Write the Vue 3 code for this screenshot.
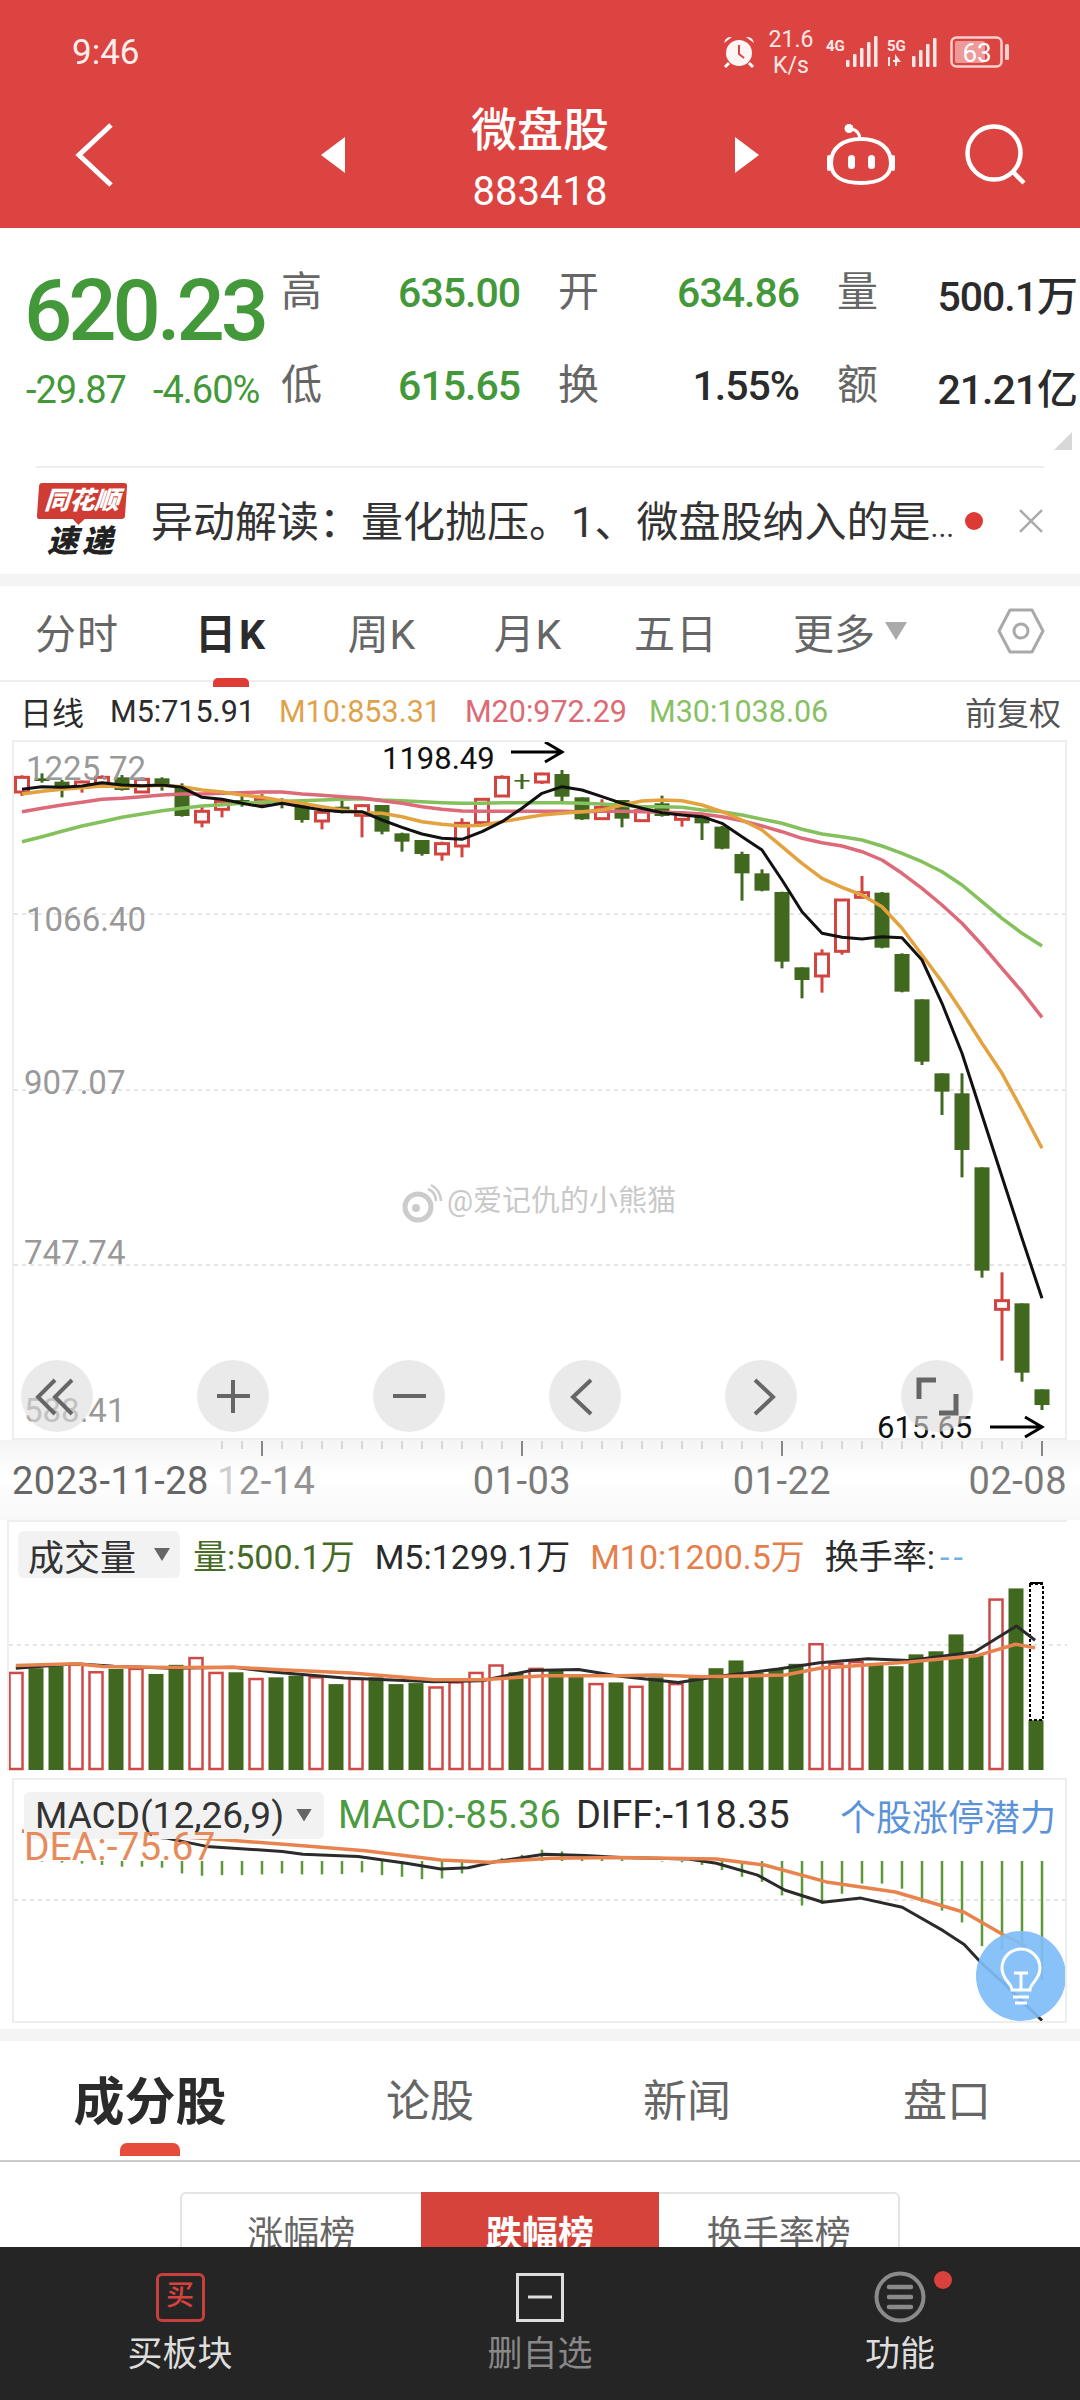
<template>
  <div class="phone">
    <div class="page">
      <header class="top">
        <div class="status">
          <span class="time">9:46</span>
          <svg class="status-icons" width="292" height="50" viewBox="720 27 292 50">
            <circle cx="739" cy="53" r="13" fill="#fff" opacity=".95" />
            <path d="M739 45v9l5 4" fill="none" stroke="#dc4441" stroke-width="2" />
            <path d="M724 43a7 7 0 0 1 8-6zM754 43a7 7 0 0 0-8-6z" fill="#fff" />
            <path d="M729 63l-4 4M749 63l4 4" stroke="#fff" stroke-width="3" />
            <text x="791" y="47" class="st-net" text-anchor="middle">21.6</text>
            <text x="791" y="73" class="st-net" text-anchor="middle">K/s</text>
            <text x="826" y="51" class="st-small">4G</text>
            <text x="887" y="51" class="st-small">5G</text>
            <rect v-for="b in signalA" :key="'a' + b.x" :x="b.x" :y="b.y" width="3.5" :height="67 - b.y" rx="1" fill="#fde8e8" />
            <rect v-for="b in signalB" :key="'b' + b.x" :x="b.x" :y="b.y" width="3.5" :height="67 - b.y" rx="1" fill="#fde8e8" />
            <path d="M889 57v9M893 61h6l-3-4v9" fill="none" stroke="#fde8e8" stroke-width="2" />
            <rect x="951.5" y="37.5" width="50" height="29" rx="5" fill="none" stroke="#f7cfcf" stroke-width="2.5" />
            <rect x="955" y="41" width="30" height="22" rx="2" fill="#ee9a98" />
            <rect x="1005" y="44" width="4" height="16" rx="1.5" fill="#f7cfcf" />
            <text x="977" y="62" class="st-batt" text-anchor="middle">63</text>
          </svg>
        </div>
        <div class="title-row">
          <svg class="back" width="40" height="66" viewBox="0 0 40 66">
            <path d="M36 3L4 33l32 30" fill="none" stroke="#fff" stroke-width="5" />
          </svg>
          <span class="tri tri-left"></span>
          <div class="title">
            <div class="name">微盘股</div>
            <div class="code">883418</div>
          </div>
          <span class="tri tri-right"></span>
          <svg class="robot" width="68" height="62" viewBox="0 0 68 62">
            <circle cx="22" cy="4.5" r="4.5" fill="#fff" />
            <path d="M24 5c7 1 9 6 9 11" fill="none" stroke="#fff" stroke-width="3" />
            <path d="M34 15c18 0 30 9 30 24 0 13-11 20-30 20S4 52 4 39c0-15 12-24 30-24z" fill="none" stroke="#fff" stroke-width="4" />
            <rect x="0" y="31" width="4" height="16" rx="2" fill="#fff" />
            <rect x="64" y="31" width="4" height="16" rx="2" fill="#fff" />
            <rect x="21" y="31" width="7" height="14" rx="3.5" fill="#fff" />
            <rect x="41" y="31" width="7" height="14" rx="3.5" fill="#fff" />
          </svg>
          <svg class="search" width="62" height="62" viewBox="0 0 62 62">
            <circle cx="29" cy="29" r="26.5" fill="none" stroke="#fff" stroke-width="4.5" />
            <path d="M48 48l11 11" stroke="#fff" stroke-width="4.5" />
          </svg>
        </div>
      </header>

      <section class="quote">
        <div class="quote-main">
          <div class="quote-left">
            <div class="price">620.23</div>
            <div class="change"><span>-29.87</span><span>-4.60%</span></div>
          </div>
          <div class="quote-grid">
            <div v-for="q in quoteCells" :key="q.label" class="cell">
              <span class="cell-label">{{ q.label }}</span>
              <span class="cell-value" :class="{ down: q.down }">{{ q.value }}</span>
            </div>
          </div>
        </div>
        <div class="quote-foot"><span class="corner"></span></div>
      </section>

      <section class="news">
        <div class="logo">
          <div class="logo-top">同花顺</div>
          <div class="logo-bottom">速递</div>
        </div>
        <div class="news-text">异动解读：量化抛压。1、微盘股纳入的是<span class="dots">...</span></div>
        <span class="news-dot"></span>
        <svg class="news-close" width="26" height="26" viewBox="0 0 26 26">
          <path d="M2 2l22 22M24 2L2 24" stroke="#aaa" stroke-width="2.5" />
        </svg>
      </section>
      <div class="stripe"></div>

      <nav class="period">
        <span v-for="p in periods" :key="p.text" class="period-item" :class="{ on: p.on }" :style="{ width: p.w + 'px' }">{{ p.text }}</span>
        <span class="period-more">更多<i class="more-tri"></i></span>
        <svg class="hex" width="48" height="46" viewBox="0 0 48 46">
          <path d="M13 2h22l11 21-11 21H13L2 23z" fill="none" stroke="#a9a9a9" stroke-width="3" stroke-linejoin="round" />
          <circle cx="24" cy="23" r="7" fill="none" stroke="#a9a9a9" stroke-width="3" />
        </svg>
      </nav>

      <div class="ma-row">
        <span class="ma-label">日线</span>
        <span class="ma5">M5:715.91</span>
        <span class="ma10">M10:853.31</span>
        <span class="ma20">M20:972.29</span>
        <span class="ma30">M30:1038.06</span>
        <span class="ma-adj">前复权</span>
      </div>

      <div class="kline">
        <svg width="1051" height="696" viewBox="14 742 1051 696">
          <line v-for="y in [914, 1090, 1265]" :key="y" x1="14" x2="1065" :y1="y" :y2="y" class="grid-line" />
          <g v-for="c in candles" :key="c.x">
            <line :x1="c.x" :x2="c.x" :y1="c.wt" :y2="c.wb" :stroke="c.up ? '#d2443f' : '#40691f'" stroke-width="3" />
            <rect v-if="c.up" :x="c.x - 6.5" :y="c.bt" width="13" :height="c.bh" fill="#fff" stroke="#d2443f" stroke-width="3" />
            <rect v-else :x="c.x - 7.5" :y="c.bt" width="15" :height="c.bh" fill="#40691f" />
          </g>
          <polyline :points="ma30" class="ln" stroke="#84c05c" stroke-width="3.5" />
          <polyline :points="ma20" class="ln" stroke="#dd6a78" stroke-width="3.5" />
          <polyline :points="ma10" class="ln" stroke="#e3a23e" stroke-width="3.5" />
          <polyline :points="ma5" class="ln" stroke="#111" stroke-width="3" />

          <text x="26" y="780" class="axis-label">1225.72</text>
          <text x="26" y="931" class="axis-label">1066.40</text>
          <text x="24" y="1094" class="axis-label">907.07</text>
          <text x="24" y="1264" class="axis-label">747.74</text>
          <text x="24" y="1422" class="axis-label">588.41</text>

          <text x="382" y="769" class="mark">1198.49</text>
          <path d="M511 752h50M545 742l17 10-17 10" fill="none" stroke="#000" stroke-width="3" />
          <text x="877" y="1438" class="mark">615.65</text>
          <path d="M990 1427h52M1025 1417l17 10-17 10" fill="none" stroke="#000" stroke-width="3" />

          <g class="watermark">
            <circle cx="418" cy="1207" r="13" fill="none" stroke="#ccc" stroke-width="5" />
            <circle cx="416" cy="1208" r="4" fill="#ccc" />
            <path d="M428 1189a13 13 0 0 1 8 12M431 1185a19 19 0 0 1 10 16" fill="none" stroke="#ccc" stroke-width="2.5" />
            <text x="447" y="1211" class="wm-text">@爱记仇的小熊猫</text>
          </g>

          <circle v-for="x in zoomBtns" :key="x" :cx="x" cy="1396" r="36" fill="#dcdcdc" opacity=".6" />
          <g fill="none" stroke="#666" stroke-width="4">
            <path d="M55 1380l-17 17 17 17M72 1380l-17 17 17 17" />
            <path d="M233 1380v33M217 1396h33" />
            <path d="M393 1396h33" />
            <path d="M591 1380l-18 17 18 17" />
            <path d="M755 1380l18 17-18 17" />
            <path d="M919 1399v-19h17M956 1394v19h-17" stroke-width="5" />
          </g>
        </svg>
      </div>

      <svg class="axis" width="1080" height="80" viewBox="0 1440 1080 80">
        <line v-for="x in ticks" :key="x" :x1="x" :x2="x" y1="1441" y2="1449" stroke="#ccc" stroke-width="1.5" />
        <line v-for="x in [262, 522, 782, 1042]" :key="x" :x1="x" :x2="x" y1="1441" y2="1456" stroke="#888" stroke-width="2" />
        <text x="12" y="1494" class="date date-first">2023-11-28</text>
        <text x="217" y="1494" class="date"><tspan opacity=".35">1</tspan><tspan opacity=".8">2-14</tspan></text>
        <text x="522" y="1494" class="date" text-anchor="middle">01-03</text>
        <text x="782" y="1494" class="date" text-anchor="middle">01-22</text>
        <text x="1067" y="1494" class="date" text-anchor="end">02-08</text>
      </svg>

      <section class="volume">
        <div class="pane-head">
          <span class="chip chip-vol">成交量<i class="chip-tri"></i></span>
          <span class="v-green">量:500.1万</span>
          <span class="v-dark">M5:1299.1万</span>
          <span class="v-orange">M10:1200.5万</span>
          <span class="v-dark">换手率:<b class="v-blue">--</b></span>
        </div>
        <svg width="1058" height="193" viewBox="9 1578 1058 193">
          <line x1="9" x2="1067" y1="1645" y2="1645" class="grid-line" />
          <g v-for="b in volBars" :key="b.x">
            <rect v-if="b.up" :x="b.x - 6.5" :y="b.y" width="13" :height="1769 - b.y" fill="#fff" stroke="#cf4a46" stroke-width="2.5" />
            <rect v-else :x="b.x - 7.5" :y="b.y" width="15" :height="1770 - b.y" fill="#40691f" />
          </g>
          <rect x="1030" y="1584" width="13" height="136" fill="none" stroke="#000" stroke-width="2" stroke-dasharray="3 2" />
          <rect x="1030" y="1582" width="13" height="2" fill="#000" />
          <polyline :points="volBlack" class="ln" stroke="#2b2b2b" stroke-width="3" />
          <polyline :points="volOrange" class="ln" stroke="#e8834d" stroke-width="3.5" />
        </svg>
      </section>

      <section class="macd">
        <svg width="1051" height="241" viewBox="14 1780 1051 241">
          <line x1="14" x2="1065" y1="1900" y2="1900" class="grid-line" />
          <line v-for="b in macdBars" :key="b.x" :x1="b.x" :x2="b.x" y1="1861" :y2="b.y" stroke="#5a9a3a" stroke-width="2.5" />
          <polyline :points="macdBlack" class="ln" stroke="#2b2b2b" stroke-width="3" />
          <polyline :points="macdOrange" class="ln" stroke="#e8834d" stroke-width="3.5" />
          <circle cx="1021" cy="1976" r="45" fill="#7fbdf7" opacity=".92" />
          <path d="M1012 1990c0-7-10-10-10-22a19 19 0 0 1 38 0c0 12-10 15-10 22zM1013 1997h16M1015 2003h12M1014 1973h14M1021 1973v17" fill="none" stroke="#fff" stroke-width="3" />
        </svg>
        <div class="macd-head">
          <span class="chip chip-macd">MACD(12,26,9)<i class="chip-tri"></i></span>
          <span class="m-green">MACD:-85.36</span>
          <span class="m-dark">DIFF:-118.35</span>
          <span class="m-blue">个股涨停潜力</span>
        </div>
        <span class="dea">DEA:-75.67</span>
      </section>
      <div class="stripe stripe-low"></div>

      <nav class="detail-tabs">
        <span class="detail-tab on">成分股</span>
        <span class="detail-tab">论股</span>
        <span class="detail-tab">新闻</span>
        <span class="detail-tab">盘口</span>
      </nav>

      <div class="rank">
        <span class="rank-item">涨幅榜</span>
        <span class="rank-item on">跌幅榜</span>
        <span class="rank-item">换手率榜</span>
      </div>
    </div>

    <footer class="bottom">
      <div class="bottom-item">
        <div class="bottom-icon"><span class="buy-icon">买</span></div>
        <span class="bottom-text">买板块</span>
      </div>
      <div class="bottom-item">
        <div class="bottom-icon">
          <svg width="48" height="49" viewBox="0 0 48 49">
            <rect x="1.5" y="1.5" width="45" height="46" fill="none" stroke="#ddd" stroke-width="3" />
            <path d="M12 24h24" stroke="#ddd" stroke-width="3" />
          </svg>
        </div>
        <span class="bottom-text muted">删自选</span>
      </div>
      <div class="bottom-item">
        <div class="bottom-icon">
          <svg width="52" height="52" viewBox="0 0 52 52">
            <circle cx="26" cy="26" r="23.5" fill="none" stroke="#8a8a8a" stroke-width="4" />
            <path d="M15 16h22M15 26h22M15 36h22" stroke="#8a8a8a" stroke-width="4.5" stroke-linecap="round" />
          </svg>
        </div>
        <span class="bottom-text">功能</span>
        <span class="bottom-dot"></span>
      </div>
    </footer>
  </div>
</template>

<script setup>
// 所有图表坐标都按整页像素换算
const quoteCells = [
  { label: '高', value: '635.00', down: true },
  { label: '开', value: '634.86', down: true },
  { label: '量', value: '500.1万' },
  { label: '低', value: '615.65', down: true },
  { label: '换', value: '1.55%' },
  { label: '额', value: '21.21亿' },
];

const periods = [
  { text: '分时', w: 154 },
  { text: '日K', w: 155, on: true },
  { text: '周K', w: 146 },
  { text: '月K', w: 146 },
  { text: '五日', w: 150 },
];

const signalA = [846, 853, 860, 867, 874].map((x, i) => ({ x, y: 60 - i * 6 }));
const signalB = [912, 919, 926, 933].map((x, i) => ({ x, y: 56 - i * 6 }));

const zy = (z) => 590 + z / 3;
const ix = (i) => 22 + 20 * i;

// [涨?, 上影, 实体顶, 实体底, 下影]，取自放大图的纵坐标
const rawCandles = [
  [1, 556, 562, 606, 618], [0, 550, 565, 573, 578], [0, 570, 575, 592, 622], [1, 572, 576, 590, 608],
  [1, 556, 562, 580, 585], [0, 555, 562, 600, 602], [1, 562, 568, 606, 608], [0, 562, 565, 588, 602],
  [0, 580, 590, 678, 680], [1, 645, 664, 696, 712], [1, 625, 634, 658, 682], [0, 604, 630, 640, 650],
  [1, 612, 628, 640, 650], [0, 625, 638, 642, 655], [0, 638, 640, 690, 698], [1, 660, 667, 693, 718],
  [0, 625, 650, 668, 670], [1, 643, 647, 676, 742], [0, 645, 645, 725, 733], [0, 728, 730, 755, 785],
  [0, 750, 750, 792, 797], [1, 755, 761, 792, 812], [1, 685, 700, 768, 802], [1, 626, 628, 698, 700],
  [1, 556, 562, 618, 620], [0, 552, 570, 575, 597], [1, 548, 552, 576, 582], [0, 540, 552, 620, 635],
  [0, 622, 622, 688, 690], [1, 628, 652, 686, 688], [0, 630, 630, 686, 712], [1, 655, 662, 692, 696],
  [0, 617, 640, 678, 680], [1, 670, 674, 688, 710], [0, 672, 678, 700, 750], [0, 708, 710, 776, 778],
  [0, 785, 792, 850, 932], [0, 838, 850, 902, 904], [0, 905, 906, 1115, 1135], [0, 1132, 1132, 1170, 1225],
  [1, 1078, 1092, 1158, 1208], [1, 928, 930, 1084, 1094], [1, 858, 908, 922, 924], [0, 906, 908, 1073, 1075],
  [0, 1090, 1092, 1205, 1207], [0, 1228, 1228, 1415, 1425], [0, 1450, 1450, 1505, 1575], [0, 1450, 1510, 1680, 1762],
  [0, 1732, 1732, 2042, 2063], [1, 2047, 2132, 2158, 2312], [0, 2140, 2140, 2348, 2375], [0, 2398, 2398, 2445, 2460],
];

const candles = rawCandles.map((c, i) => ({
  x: ix(i),
  up: c[0] === 1,
  wt: zy(c[1]),
  bt: zy(c[2]),
  bh: (c[3] - c[2]) / 3,
  wb: zy(c[4]),
}));

const toLine = (ys) => ys.map((y, i) => `${ix(i)},${zy(y).toFixed(1)}`).join(' ');

const ma5 = toLine([598, 590, 592, 588, 578, 585, 587, 585, 592, 622, 628, 640, 650, 640, 650, 660, 665, 665, 690, 712, 732, 745, 748, 725, 695, 655, 610, 590, 600, 620, 640, 655, 668, 675, 680, 700, 740, 780, 870, 965, 1030, 1042, 1047, 1040, 1043, 1110, 1240, 1390, 1575, 1760, 1945, 2125]);
const ma10 = toLine([612, 604, 598, 593, 588, 590, 588, 586, 590, 600, 606, 615, 622, 632, 640, 650, 660, 668, 670, 680, 695, 703, 708, 706, 695, 685, 675, 670, 665, 660, 645, 633, 630, 632, 645, 665, 690, 720, 770, 820, 865, 892, 915, 950, 1015, 1095, 1175, 1265, 1360, 1450, 1560, 1675]);
const ma20 = toLine([665, 655, 645, 637, 628, 625, 620, 615, 612, 612, 610, 608, 606, 606, 612, 616, 620, 624, 632, 640, 650, 658, 663, 664, 664, 664, 664, 664, 665, 664, 664, 665, 667, 668, 672, 680, 692, 708, 725, 745, 758, 768, 785, 810, 850, 895, 945, 1000, 1065, 1135, 1205, 1282]);
const ma30 = toLine([755, 740, 724, 708, 695, 682, 672, 662, 655, 648, 644, 640, 637, 634, 632, 630, 628, 626, 630, 632, 635, 638, 640, 640, 638, 638, 638, 638, 640, 642, 646, 650, 650, 652, 660, 665, 675, 688, 700, 718, 732, 740, 750, 768, 790, 815, 845, 885, 935, 985, 1030, 1068]);

const zoomBtns = [57, 233, 409, 585, 761, 937];

const ticks = [];
for (let x = 222; x <= 1042; x += 20) ticks.push(x);

// 下方两个副图的放大系数
const lowY = (z) => 1510 + z / 2.958;

const volTops = [482, 468, 462, 458, 480, 470, 470, 485, 458, 438, 482, 480, 500, 495, 490, 495, 515, 500, 495, 515, 512, 525, 510, 482, 460, 480, 470, 475, 490, 515, 510, 523, 495, 515, 497, 468, 445, 480, 470, 455, 397, 455, 450, 455, 462, 427, 418, 368, 430, 265, 232, 622];
const volUp = [0, 3, 4, 6, 9, 10, 12, 15, 17, 21, 22, 23, 24, 26, 29, 31, 33, 40, 41, 42, 49];
const volBars = volTops.map((t, i) => ({ x: 16 + 20 * i, y: lowY(t), up: volUp.includes(i) }));

const lowLine = (pts) => pts.map(([x, y]) => `${(x / 1.452).toFixed(1)},${lowY(y).toFixed(1)}`).join(' ');

const volBlack = lowLine([[23, 468], [110, 455], [165, 462], [250, 468], [340, 465], [400, 480], [500, 497], [630, 508], [700, 505], [770, 475], [840, 472], [900, 492], [985, 510], [1050, 490], [1130, 470], [1190, 452], [1260, 440], [1320, 445], [1415, 420], [1476, 343], [1503, 385]]);
const volOrange = lowLine([[23, 460], [110, 455], [150, 463], [250, 466], [340, 465], [400, 472], [510, 482], [630, 502], [700, 502], [790, 490], [900, 490], [950, 488], [1020, 493], [1140, 488], [1190, 468], [1320, 450], [1420, 430], [1475, 397], [1503, 408]]);

const macdEnds = [1038, 1040, 1043, 1046, 1050, 1055, 1055, 1058, 1075, 1082, 1080, 1080, 1078, 1075, 1078, 1078, 1077, 1072, 1080, 1085, 1092, 1090, 1075, 1045, 1030, 1020, 1005, 1010, 1025, 1030, 1033, 1038, 1040, 1042, 1050, 1065, 1085, 1100, 1140, 1170, 1165, 1135, 1105, 1105, 1120, 1160, 1185, 1220, 1290, 1300, 1300, 1390];
const macdBars = macdEnds.map((e, i) => ({ x: ix(i), y: lowY(e) }));

const macdBlack = lowLine([[32, 950], [150, 955], [240, 970], [300, 995], [410, 1010], [440, 1018], [520, 1025], [590, 1045], [640, 1062], [680, 1058], [720, 1040], [790, 1018], [850, 1022], [900, 1028], [1000, 1032], [1040, 1045], [1100, 1080], [1140, 1125], [1195, 1160], [1250, 1148], [1310, 1175], [1370, 1245], [1400, 1285], [1425, 1340], [1460, 1405], [1513, 1510]]);
const macdOrange = lowLine([[32, 950], [200, 958], [320, 975], [440, 993], [530, 1008], [640, 1035], [710, 1042], [800, 1030], [900, 1028], [1040, 1032], [1110, 1050], [1200, 1100], [1300, 1130], [1400, 1190], [1460, 1260], [1490, 1290]]);
</script>

<style scoped>
.phone {
  width: 1080px;
  height: 2400px;
  display: flex;
  flex-direction: column;
  overflow: hidden;
  background: #fff;
  font-family: Roboto, "Noto Sans CJK SC", sans-serif;
  color: #2b2b2b;
}

.page {
  flex: 1;
  overflow: hidden;
}

svg {
  display: block;
}

/* 顶部红色区域 */
.top {
  height: 228px;
  background: #dc4441;
  color: #fff;
}

.status {
  height: 100px;
  padding: 4px 68px 0 72px;
  box-sizing: border-box;
  display: flex;
  align-items: center;
  justify-content: space-between;
}

.time {
  font-size: 35px;
  color: #fdeeee;
}

.st-net {
  font-size: 23px;
  fill: #fde8e8;
}

.st-small {
  font-size: 15px;
  font-weight: 700;
  fill: #fde8e8;
}

.st-batt {
  font-size: 26px;
  fill: #fff;
}

.title-row {
  height: 128px;
  padding: 0 0 18px 75px;
  box-sizing: border-box;
  display: flex;
  align-items: center;
}

.tri {
  width: 24px;
  height: 36px;
  background: #fff;
}

.tri-left {
  margin-left: 206px;
  clip-path: polygon(100% 0, 100% 100%, 0 50%);
}

.tri-right {
  margin-left: 95px;
  clip-path: polygon(0 0, 100% 50%, 0 100%);
}

.title {
  width: 200px;
  margin-left: 95px;
  align-self: flex-start;
  text-align: center;
}

.name {
  font-size: 46px;
  line-height: 60px;
  font-weight: 500;
}

.code {
  margin-top: 10px;
  font-size: 40px;
  line-height: 44px;
}

.robot {
  margin-left: 68px;
}

.search {
  margin-left: 70px;
}

/* 报价 */
.quote-main {
  display: flex;
  padding-top: 38px;
}

.quote-left {
  width: 281px;
  padding-left: 24px;
  box-sizing: border-box;
}

.price {
  font-size: 85px;
  line-height: 90px;
  font-weight: 500;
  letter-spacing: -4px;
  color: #43983a;
}

.change {
  display: flex;
  gap: 27px;
  margin: 14px 0 0 2px;
  font-size: 38px;
  line-height: 40px;
  letter-spacing: -1px;
  white-space: nowrap;
  color: #43983a;
}

.quote-grid {
  display: grid;
  grid-template-columns: 239px 241px 240px;
  column-gap: 38px;
  row-gap: 41px;
}

.cell {
  height: 52px;
  display: flex;
  align-items: center;
  justify-content: space-between;
}

.cell-label {
  margin-bottom: 8px;
  font-size: 41px;
  color: #666;
}

.cell-value {
  margin-top: 2px;
  font-size: 41px;
  font-weight: 500;
  letter-spacing: -1px;
  white-space: nowrap;
}

.cell-value.down {
  color: #43983a;
}

.quote-foot {
  height: 55px;
  display: flex;
  justify-content: flex-end;
  padding: 21px 8px 0 0;
  box-sizing: border-box;
}

.corner {
  width: 18px;
  height: 18px;
  background: #d8d8d8;
  clip-path: polygon(100% 0, 100% 100%, 0 100%);
}

/* 异动解读 */
.news {
  height: 108px;
  margin: 0 36px;
  border-top: 2px solid #eee;
  box-sizing: border-box;
  display: flex;
  align-items: center;
}

.logo {
  width: 88px;
  margin-left: 2px;
  text-align: center;
}

.logo-top {
  position: relative;
  height: 36px;
  line-height: 36px;
  border-radius: 3px;
  background: #cf3c34;
  color: #fff;
  font-size: 25px;
  font-weight: 900;
  font-style: italic;
  white-space: nowrap;
  transform: skewX(-4deg);
}

.logo-top::after {
  content: "";
  position: absolute;
  left: 36px;
  bottom: -6px;
  width: 12px;
  height: 6px;
  background: #cf3c34;
  clip-path: polygon(0 0, 100% 0, 50% 100%);
}

.logo-bottom {
  margin-top: 6px;
  font-size: 31px;
  line-height: 34px;
  font-weight: 900;
  font-style: italic;
  color: #222;
  letter-spacing: 4px;
}

.news-text {
  margin: 0 0 6px 25px;
  width: 806px;
  font-size: 42px;
  white-space: nowrap;
  color: #333;
}

.dots {
  font-size: 30px;
}

.news-dot {
  width: 18px;
  height: 18px;
  margin-left: 9px;
  border-radius: 50%;
  background: #dc3a35;
}

.news-close {
  margin-left: 35px;
}

.stripe {
  height: 12px;
  background: #f4f4f4;
}

/* 周期切换 */
.period {
  height: 96px;
  border-bottom: 2px solid #eee;
  box-sizing: border-box;
  display: flex;
  align-items: center;
  padding-bottom: 4px;
  font-size: 41px;
  color: #666;
}

.period-item {
  position: relative;
  text-align: center;
  white-space: nowrap;
  letter-spacing: 1px;
}

.period-item.on {
  color: #2b2b2b;
  font-weight: 700;
  letter-spacing: 3px;
}

.period-item.on::after {
  content: "";
  position: absolute;
  left: 59px;
  bottom: -26px;
  width: 36px;
  height: 9px;
  border-radius: 5px 5px 0 0;
  background: #e03c36;
}

.period-more {
  display: flex;
  align-items: center;
  margin-left: 42px;
}

.more-tri {
  width: 22px;
  height: 18px;
  margin-left: 10px;
  background: #aaa;
  clip-path: polygon(0 0, 100% 0, 50% 100%);
}

.hex {
  margin-left: auto;
  margin-right: 35px;
}

/* 均线说明 */
.ma-row {
  height: 58px;
  display: flex;
  align-items: center;
  padding-left: 20px;
  font-size: 30.5px;
  white-space: nowrap;
}

.ma-label {
  font-size: 32px;
}

.ma5 {
  margin-left: 26px;
}

.ma10 {
  margin-left: 24px;
  color: #dfa24a;
}

.ma20 {
  margin-left: 24px;
  color: #dd6a74;
}

.ma30 {
  margin-left: 22px;
  color: #88c063;
}

.ma-adj {
  margin-left: auto;
  margin-right: 19px;
  font-size: 32px;
  color: #555;
}

.kline {
  width: 1055px;
  height: 700px;
  margin-left: 12px;
  border: 2px solid #eee;
  box-sizing: border-box;
}

.grid-line {
  stroke: #ddd;
  stroke-width: 1.5;
  stroke-dasharray: 4 4;
}

.ln {
  fill: none;
  stroke-linejoin: round;
}

.axis-label {
  font-size: 33px;
  fill: #999;
}

.mark {
  font-size: 31px;
  fill: #111;
}

.wm-text {
  font-size: 29px;
  fill: #bbb;
  opacity: 0.8;
}

.axis {
  background: linear-gradient(#f4f4f4, #fff 45%, #f8f8f8);
}

.date {
  font-size: 38px;
  letter-spacing: 0.5px;
  fill: #7a7a7a;
}

.date-first {
  fill: #666;
}

/* 成交量 */
.volume {
  width: 1060px;
  height: 251px;
  margin-left: 7px;
  border-top: 2px solid #eee;
  border-left: 2px solid #eee;
  box-sizing: border-box;
}

.pane-head {
  height: 56px;
  padding: 9px 0 0 9px;
  box-sizing: border-box;
  display: flex;
  align-items: center;
  font-size: 34px;
  white-space: nowrap;
}

.chip {
  height: 47px;
  display: flex;
  align-items: center;
  padding: 0 10px;
  box-sizing: border-box;
  border-radius: 6px;
  background: #f2f2f2;
  font-size: 36px;
  color: #333;
}

.chip-vol {
  width: 162px;
  justify-content: space-between;
}

.chip-tri {
  width: 16px;
  height: 13px;
  background: #666;
  clip-path: polygon(0 0, 100% 0, 50% 100%);
}

.v-green {
  margin-left: 13px;
  color: #456b26;
}

.v-dark {
  margin-left: 20px;
}

.v-orange {
  margin-left: 20px;
  color: #e57f4b;
}

.v-blue {
  margin-left: 5px;
  font-weight: 400;
  color: #6fb1e8;
  letter-spacing: 4px;
}

/* MACD */
.macd {
  position: relative;
  width: 1055px;
  height: 245px;
  margin: 7px 0 0 12px;
  border: 2px solid #eee;
  box-sizing: border-box;
}

.macd-head {
  position: absolute;
  left: 10px;
  top: 9px;
  width: 1032px;
  display: flex;
  align-items: center;
  font-size: 38px;
  white-space: nowrap;
}

.chip-macd {
  width: 300px;
  font-size: 37px;
  justify-content: space-between;
  padding: 0 12px 0 11px;
}

.m-green {
  margin-left: 14px;
  color: #4c9a41;
}

.m-dark {
  margin-left: 15px;
}

.m-blue {
  margin-left: auto;
  font-size: 36px;
  color: #5c92d8;
}

.dea {
  position: absolute;
  left: 10px;
  top: 45px;
  font-size: 39px;
  line-height: 44px;
  color: #e57f4b;
  opacity: 0.9;
}

.stripe-low {
  margin-top: 6px;
}

/* 成分股 */
.detail-tabs {
  height: 121px;
  border-bottom: 2px solid #ccc;
  box-sizing: border-box;
  display: grid;
  grid-template-columns: 300px 260px 254px 266px;
  align-items: center;
  padding-bottom: 6px;
  font-size: 44px;
  color: #666;
}

.detail-tab {
  position: relative;
  text-align: center;
}

.detail-tab.on {
  font-size: 51px;
  font-weight: 700;
  color: #2b2b2b;
}

.detail-tab.on::after {
  content: "";
  position: absolute;
  left: 120px;
  bottom: -21px;
  width: 60px;
  height: 13px;
  border-radius: 7px 7px 0 0;
  background: #e64c3c;
}

.rank {
  width: 720px;
  height: 80px;
  margin: 30px 0 0 180px;
  border: 2px solid #e4e4e4;
  border-radius: 6px 6px 0 0;
  box-sizing: border-box;
  display: flex;
  font-size: 36px;
  color: #666;
}

.rank-item {
  flex: 1;
  margin-top: -2px;
  line-height: 86px;
  text-align: center;
}

.rank-item.on {
  background: #d5433b;
  color: #fff;
  font-weight: 700;
}

/* 底部操作栏 */
.bottom {
  height: 153px;
  flex: none;
  background: #252525;
  display: grid;
  grid-template-columns: repeat(3, 1fr);
}

.bottom-item {
  position: relative;
  display: flex;
  flex-direction: column;
  align-items: center;
  padding-top: 24px;
  box-sizing: border-box;
}

.bottom-icon {
  height: 52px;
  display: flex;
  align-items: center;
}

.bottom-text {
  margin-top: 7px;
  font-size: 35px;
  line-height: 50px;
  color: #ddd;
}

.bottom-text.muted {
  color: #888;
}

.buy-icon {
  width: 49px;
  height: 49px;
  border: 3px solid #c8403c;
  border-radius: 6px;
  box-sizing: border-box;
  text-align: center;
  font-size: 28px;
  line-height: 40px;
  font-weight: 500;
  color: #d8413d;
}

.bottom-dot {
  position: absolute;
  left: 214px;
  top: 24px;
  width: 18px;
  height: 18px;
  border-radius: 50%;
  background: #d8413d;
}
</style>
